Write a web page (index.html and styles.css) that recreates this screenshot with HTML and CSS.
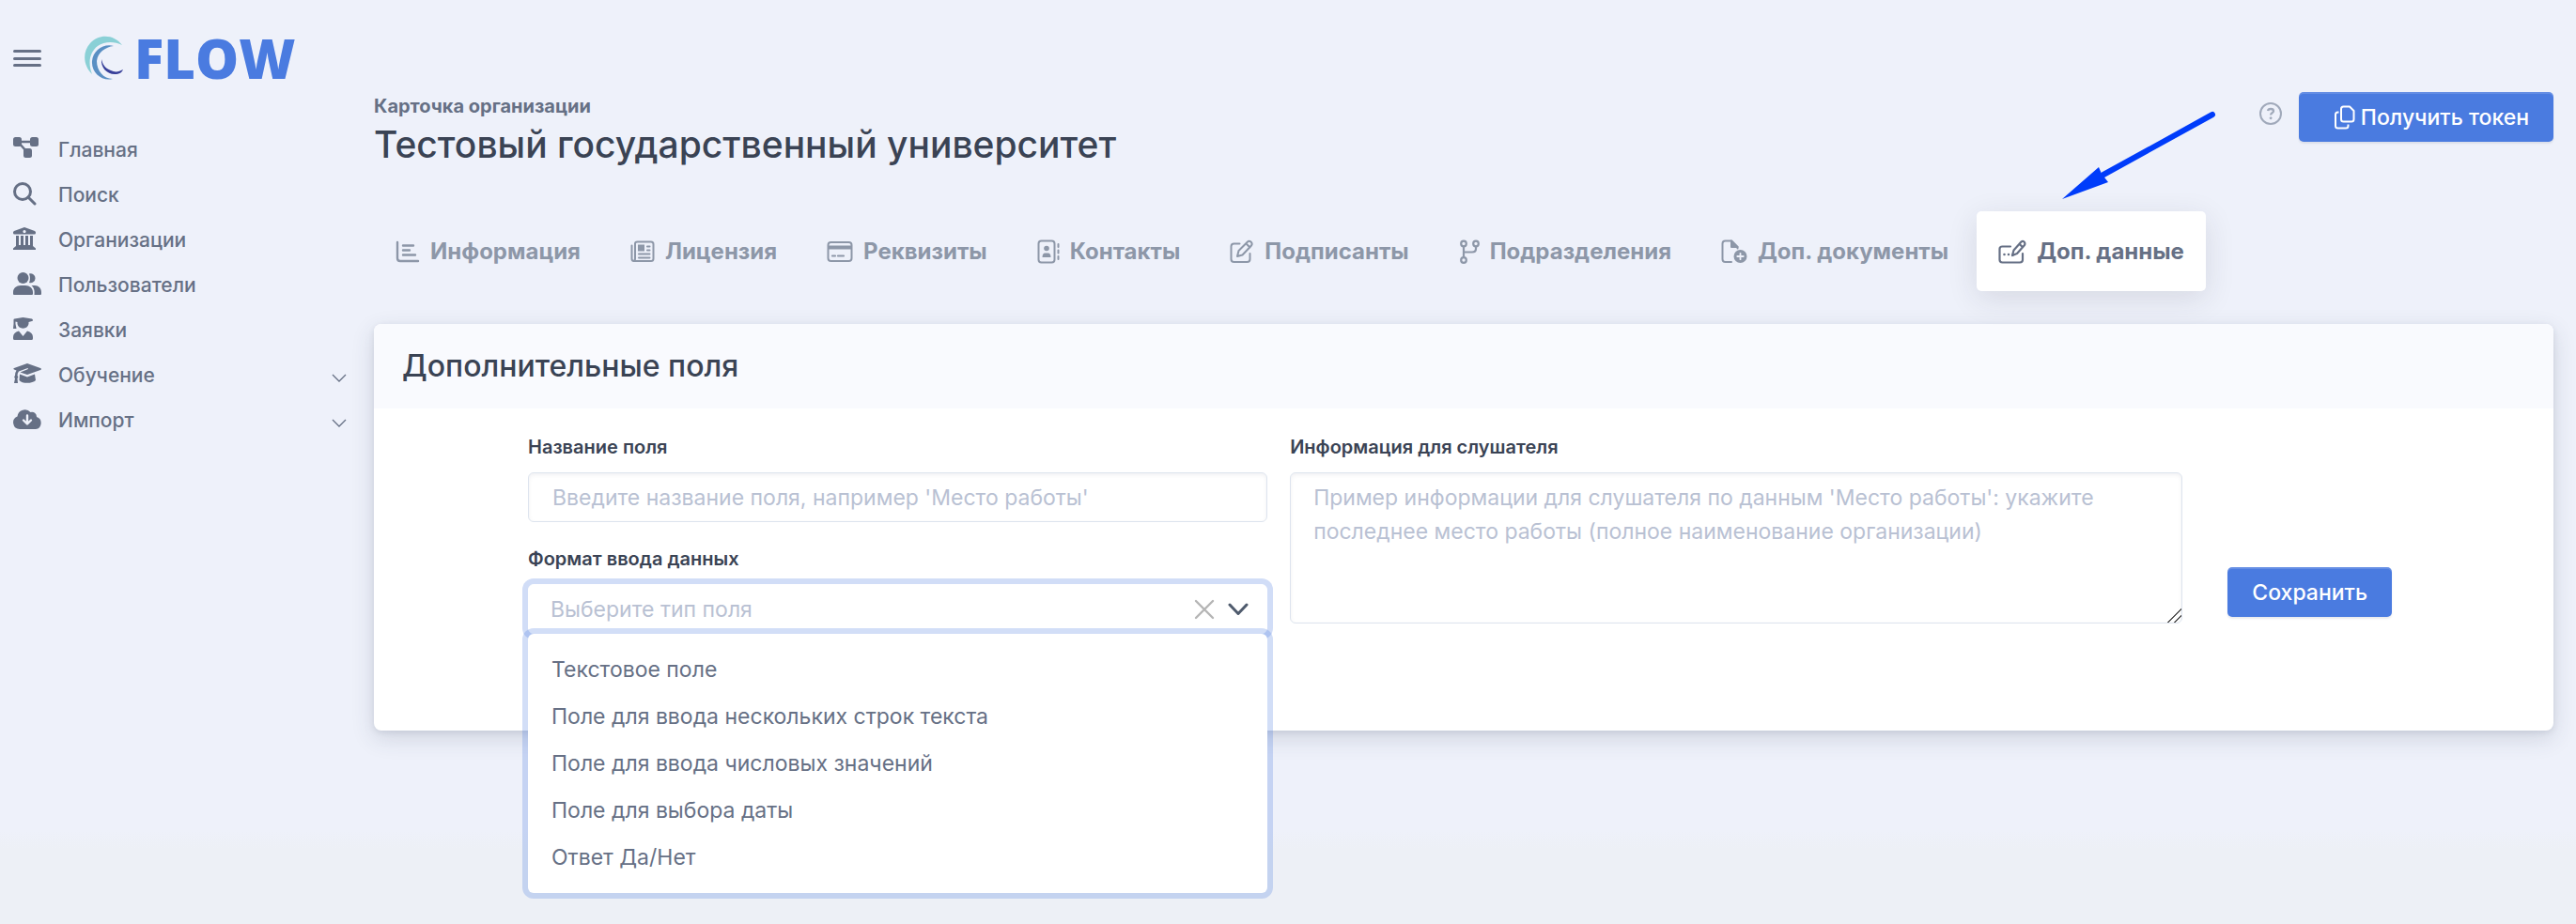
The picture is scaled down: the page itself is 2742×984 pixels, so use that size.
FILE: index.html
```html
<!DOCTYPE html>
<html lang="ru">
<head>
<meta charset="utf-8">
<title>FLOW — Карточка организации</title>
<link rel="stylesheet" href="styles.css">
</head>
<body>
<div class="layout">
  <aside class="sidebar">
    <div class="brand-row">
      <button class="menu-toggle" type="button" aria-label="Меню">
        <svg width="30" height="20" viewBox="0 0 30 20" fill="none" stroke="currentColor" stroke-width="3" stroke-linecap="round"><path d="M1.5 2.500h27M1.500 10.500h27M1.500 17.500h27"/></svg>
      </button>
      <a class="brand" href="#">
        <svg width="44" height="48" viewBox="0 0 44 48">
          <path d="M40 10C32 -1 16 -3 6 8C-3 18 -1 32 8 41C3 28 6 17 14 11C21 6 32 6 40 10Z" fill="#8ad0d6"/>
          <path d="M31 11C20 8 9 16 8 27C7 40 19 49 30 46C20 46 13 37 13 27C14 18 22 12 31 11Z" fill="#5a8fc3"/>
          <path d="M18 25C17 34 24 41 32 41C37 41 40 39 41 36C36 39 32 39 28 37C22 35 19 30 18 25Z" fill="#38409a"/>
        </svg>
        <span class="brand-name">FLOW</span>
      </a>
    </div>
    <nav class="side-nav">
      <a class="side-link" href="#"><svg class="side-icon" width="30" height="26" viewBox="0 0 30 26" fill="currentColor"><rect x="0" y="1" width="9" height="10" rx="2.500"/><rect x="18" y="1" width="9" height="10" rx="2.500"/><rect x="11" y="13" width="9" height="10" rx="2.500"/><path d="M7 6h13M6 7l8 9" stroke="currentColor" stroke-width="2.500"/></svg><span>Главная</span></a>
      <a class="side-link" href="#"><svg class="side-icon" width="30" height="26" viewBox="0 0 30 26" fill="none" stroke="currentColor" stroke-width="3" stroke-linecap="round"><circle cx="10" cy="11" r="8.500"/><path d="M16 17l7 7"/></svg><span>Поиск</span></a>
      <a class="side-link" href="#"><svg class="side-icon" width="30" height="26" viewBox="0 0 30 26" fill="currentColor"><path fill-rule="evenodd" d="M12 1L23 5Q24 5.500 24 6.500V7Q24 8.500 22.500 8.500H1.500Q0 8.500 0 7V6.500Q0 5.500 1 5ZM12 4a1.600 1.600 0 1 0 .01 0Z"/><path d="M3 10h3v10h2v-10h3v10h2v-10h3v10h2v-10h3v11l3 2.500v1.500H0v-1.500L3 21Z"/></svg><span>Организации</span></a>
      <a class="side-link" href="#"><svg class="side-icon" width="30" height="26" viewBox="0 0 30 26" fill="currentColor"><circle cx="10.500" cy="7" r="6"/><path d="M17 2.500a5 5 0 1 1 0 9.500q2-4.500 0-9.500ZM0 24v-2c0-4 3.500-7 8-7h5c4.500 0 8 3 8 7v2q0 1-1 1H1q-1 0-1-1ZM19.500 15H23c4 0 7 3 7 7v2q0 1-1 1h-6.500c.5-4 0-7.500-3-10Z"/></svg><span>Пользователи</span></a>
      <a class="side-link" href="#"><svg class="side-icon" width="30" height="26" viewBox="0 0 30 26" fill="currentColor"><path d="M10.500 1L20 2.500Q21 3 21 4Q21 5 20 5L16.500 6V8a6.200 6.200 0 0 1-12 0V6L2.500 5.500V8L3.500 13H0L.5 8V3.500Q.5 2.500 1.500 2.400ZM6 15.500L10.500 21L15 15.500C19 16.500 21 19 21 22v1.500q0 1.500-1.500 1.500h-18Q0 25 0 23.500V22C0 19 2 16.500 6 15.500Z"/></svg><span>Заявки</span></a>
      <a class="side-link" href="#"><svg class="side-icon" width="30" height="26" viewBox="0 0 30 26" fill="currentColor"><path d="M15 2L29 7Q31 8 29 9L15 14L7.500 11.500L16 8L15.500 7L6 10.500Q4.500 12 4.500 15Q6 16.500 4.500 18L5 23H1L2 18Q.5 16.500 2 15Q2 11.500 3.500 9.500L1 8.500Q-.5 7.800 1 7ZM7 13.500L15 16.500L23 13.500L24 20C21 23.500 9.500 24 6.500 20Z"/></svg><span>Обучение</span><svg class="side-chevron" width="16" height="10" viewBox="0 0 16 10" fill="none" stroke="currentColor" stroke-width="1.300"><path d="M1 1l7 7 7-7"/></svg></a>
      <a class="side-link" href="#"><svg class="side-icon" width="30" height="26" viewBox="0 0 30 26" fill="currentColor"><path d="M7 24A7 7 0 0 1 4.500 10.500A8 8 0 0 1 18.500 6A5 5 0 0 1 25 11A6.700 6.700 0 0 1 24 24Z"/><path d="M15 9.500v8M11 14.500l4 4 4-4" fill="none" stroke="#eef1fa" stroke-width="2.400" stroke-linecap="round" stroke-linejoin="round"/></svg><span>Импорт</span><svg class="side-chevron" width="16" height="10" viewBox="0 0 16 10" fill="none" stroke="currentColor" stroke-width="1.300"><path d="M1 1l7 7 7-7"/></svg></a>
    </nav>
  </aside>

  <main class="content">
    <header class="page-head">
      <div>
        <p class="overline">Карточка организации</p>
        <h1 class="page-title">Тестовый государственный университет</h1>
      </div>
      <div class="head-actions">
        <button class="help" type="button" aria-label="Справка"><svg width="24" height="24" viewBox="0 0 24 24" fill="none" stroke="currentColor" stroke-width="2"><circle cx="12" cy="12" r="11"/><path d="M9 9C9.300 7.500 10.300 7 12 7c2 0 3 .8 3 2.200 0 2-2.900 2-2.900 4.300" stroke-width="2.300"/><circle cx="12.100" cy="16.800" r="1" fill="currentColor" stroke-width="1"/></svg></button>
        <button class="btn btn-token" type="button"><svg width="22" height="26" viewBox="0 0 22 26" fill="none" stroke="currentColor" stroke-width="2" stroke-linejoin="round"><path d="M9.500 1.500h6.500l4.500 4.500v9q0 2.500-2.500 2.500h-8.500q-2.500 0-2.500-2.500v-11q0-2.500 2.500-2.500Z"/><path d="M4.500 7.500h-1q-2.500 0-2.500 2.500v12q0 2.500 2.500 2.500h8.500q2.500 0 2.500-2.500v-1.500"/></svg>Получить токен</button>
      </div>
      <svg class="pointer" width="170" height="98" viewBox="0 0 170 98"><path d="M162 6L46 70" stroke="#003cfa" stroke-width="6" stroke-linecap="round"/><path d="M2 96L41 62L44 69L51 78Z" fill="#003cfa"/></svg>
    </header>

    <nav class="tabs">
      <a class="tab" href="#"><svg width="26" height="24" viewBox="0 0 26 24" fill="none" stroke="currentColor" stroke-width="2.400" stroke-linecap="round"><path d="M2 2v17q0 3 3 3h19M8 5.500h11M8 10.500h7M8 15.500h13"/></svg>Информация</a>
      <a class="tab" href="#"><svg width="26" height="24" viewBox="0 0 26 24" fill="none" stroke="currentColor" stroke-width="2" stroke-linecap="round"><path d="M5 4.500V3.500Q5 1.500 7.500 1.500h14.500Q24.500 1.500 24.500 4v15.500Q24.500 22 22 22H4Q1.500 22 1.500 19.500V5.500M5 4.500v15q0 2.500-2 2.500M9 14.500h11.500M9 18.500h11.500M18 6.500h2.500M18 10.500h2.500"/><rect x="9" y="5.500" width="5" height="5" fill="currentColor"/></svg>Лицензия</a>
      <a class="tab" href="#"><svg width="28" height="24" viewBox="0 0 28 24" fill="none" stroke="currentColor" stroke-width="2"><rect x="1.500" y="2" width="25" height="20" rx="3"/><path d="M1.500 7.500h25" stroke-width="4"/><path d="M6 16.500h3M12 16.500h6" stroke-width="2.200" stroke-linecap="round"/></svg>Реквизиты</a>
      <a class="tab" href="#"><svg width="24" height="26" viewBox="0 0 24 26" fill="none" stroke="currentColor" stroke-width="2" stroke-linecap="round"><rect x="1.500" y="1.500" width="17" height="23" rx="3"/><circle cx="10" cy="9.500" r="2.800" fill="currentColor" stroke="none"/><path d="M5.500 19q0-4.500 3-4.500h3q3 0 3 4.500Z" fill="currentColor" stroke="none"/><path d="M22.500 5v3M22.500 11.500v3M22.500 18v3"/></svg>Контакты</a>
      <a class="tab" href="#"><svg width="26" height="26" viewBox="0 0 26 26" fill="none" stroke="currentColor" stroke-width="2" stroke-linecap="round" stroke-linejoin="round"><path d="M10.500 4.500H4.500Q1.500 4.500 1.500 7.500v13.500q0 3 3 3h14q3 0 3-3v-6"/><path d="M8 18l1.500-6L19 2.500q1.500-1.500 3.500 0q2 2 .5 4L13.500 16.500ZM17.500 4.500l4 4"/></svg>Подписанты</a>
      <a class="tab" href="#"><svg width="22" height="26" viewBox="0 0 22 26" fill="none" stroke="currentColor" stroke-width="2.200"><circle cx="5" cy="4.500" r="2.800"/><circle cx="18" cy="4.500" r="2.800"/><circle cx="5" cy="22" r="2.800"/><path d="M5 7.500v11.500M5 13.500h9q4 0 4-3.500V7.500"/></svg>Подразделения</a>
      <a class="tab" href="#"><svg width="28" height="26" viewBox="0 0 28 26" fill="none" stroke="currentColor" stroke-width="2" stroke-linecap="round" stroke-linejoin="round"><path d="M11 24H4.500Q1.500 24 1.500 21V4.500Q1.500 1.500 4.500 1.500H11L17.500 8v1.500"/><path d="M11 1.500v6.500h6.500Z" fill="currentColor"/><circle cx="20.500" cy="18" r="7" fill="currentColor" stroke="none"/><path d="M20.500 14.800v6.400M17.300 18h6.400" stroke="#eef1fa" stroke-width="1.800"/></svg>Доп. документы</a>
      <a class="tab tab-active" href="#" aria-current="page"><svg width="30" height="26" viewBox="0 0 30 26" fill="none" stroke="currentColor" stroke-width="2.200" stroke-linecap="round" stroke-linejoin="round"><path d="M13 7.500H4.500Q1.500 7.500 1.500 10v11.500Q1.500 24.500 4.500 24.500H23q3 0 3-3V15"/><path d="M15 17l1.500-5.500L24.500 2.500q1.500-1.300 3 0q1.500 1.500.5 3.500L20 15ZM22.500 4.800l3.500 3.500"/><path d="M6.500 16v.01M11 16v.01M15.500 16.500v.01" stroke-width="2.600"/></svg>Доп. данные</a>
    </nav>

    <section class="card">
      <header class="card-head"><h2 class="card-title">Дополнительные поля</h2></header>
      <form class="fields">
        <div class="field-col">
          <div class="field">
            <label for="name">Название поля</label>
            <input class="control" id="name" type="text" placeholder="Введите название поля, например 'Место работы'">
          </div>
          <div class="field">
            <label for="format">Формат ввода данных</label>
            <div class="combo">
              <select class="control combo-control" id="format"><option>Выберите тип поля</option></select>
              <span class="combo-icons">
                <button class="combo-clear" type="button" aria-label="Очистить"><svg width="22" height="22" viewBox="0 0 22 22" fill="none" stroke="currentColor" stroke-width="2.400" stroke-linecap="round"><path d="M2 2l18 18M20 2L2 20"/></svg></button>
                <svg width="22" height="14" viewBox="0 0 22 14" fill="none" stroke="currentColor" stroke-width="3" stroke-linecap="round" stroke-linejoin="round"><path d="M2 2l9 9.500L20 2"/></svg>
              </span>
              <ul class="options" role="listbox" aria-label="Формат ввода данных">
                <li role="option">Текстовое поле</li>
                <li role="option">Поле для ввода нескольких строк текста</li>
                <li role="option">Поле для ввода числовых значений</li>
                <li role="option">Поле для выбора даты</li>
                <li role="option">Ответ Да/Нет</li>
              </ul>
            </div>
          </div>
        </div>
        <div class="field">
          <label for="info">Информация для слушателя</label>
          <textarea class="control control-area" id="info" placeholder="Пример информации для слушателя по данным 'Место работы': укажите последнее место работы (полное наименование организации)"></textarea>
        </div>
        <button class="btn btn-save" type="submit">Сохранить</button>
      </form>
    </section>
  </main>
</div>
</body>
</html>
```
FILE: styles.css
```css
* { box-sizing: border-box; }

body {
  margin: 0;
  min-height: 100vh;
  background: linear-gradient(#eef1fa calc(100% - 100px), #edf0f6 calc(100% - 80px));
  color: #667085;
  font: 400 23px/36px Inter, "Noto Sans", sans-serif;
}

a { color: inherit; text-decoration: none; }
button { font: inherit; color: inherit; border: 0; background: none; padding: 0; cursor: pointer; }
svg { flex: none; display: block; }
h1, h2, p, ul { margin: 0; padding: 0; }

.layout { display: grid; grid-template-columns: 398px 1fr; }

.sidebar { padding: 32px 29px 0 14px; }
.brand-row { display: flex; align-items: center; gap: 46px; height: 60px; }
.brand { display: flex; align-items: center; gap: 9px; }
.brand-name { font-family: "Open Sans", Inter, sans-serif; font-size: 58px; line-height: 60px; font-weight: 800; color: #4a7be0; }
.side-nav { display: flex; flex-direction: column; margin-top: 44px; }
.side-link { display: flex; align-items: center; height: 48px; gap: 18px; font-size: 21px; font-weight: 500; color: #667085; }
.side-icon { margin-bottom: 4px; }
.side-chevron { margin: 6px 0 0 auto; }

.content { padding: 98px 24px 0 0; }
.page-head { position: relative; display: flex; justify-content: space-between; align-items: flex-start; }
.overline { margin-bottom: 2px; font-size: 20px; line-height: 30px; font-weight: 700; }
.page-title { font-size: 39px; line-height: 48px; font-weight: 500; color: #3a4354; }
.head-actions { display: flex; align-items: flex-start; gap: 18px; }
.help { margin-top: 11px; color: #a0a9ba; }
.pointer { position: absolute; right: 355px; top: 18px; }

.btn {
  height: 53px;
  border-radius: 5px;
  background: #4a7be0;
  color: #fff;
  font-weight: 500;
  box-shadow: inset 0 2px 0 rgba(255, 255, 255, .15), 0 2px 2px rgba(50, 60, 90, .1);
}
.btn-token { display: flex; align-items: center; gap: 6px; padding: 0 26px 0 38px; }
.btn-save { padding: 0 26px; }

.tabs { display: flex; gap: 7px; margin-top: 47px; }
.tab { display: flex; align-items: center; gap: 11px; height: 85px; padding: 0 23px; border-radius: 5px; font-size: 24px; font-weight: 700; color: #8d97a8; white-space: nowrap; }
.tab-active { background: #fff; color: #667085; box-shadow: 0 8px 32px rgba(40, 45, 60, .12); }

.card { margin-top: 35px; border-radius: 8px; background: #fff; box-shadow: 0 8px 24px rgba(50, 60, 90, .16), 0 2px 6px rgba(50, 60, 90, .1); }
.card-head { padding: 22px 30px; border-radius: 8px 8px 0 0; background: #f9fafe; }
.card-title { font-size: 32px; line-height: 46px; font-weight: 500; color: #3a4354; }

.fields { display: grid; grid-template-columns: 787fr 974fr auto; align-items: start; padding: 25px 172px 103px 164px; }
.fields > .field { margin-left: 24px; }
.fields > .btn-save { margin-left: 48px; margin-top: 144px; }
.field { display: flex; flex-direction: column; gap: 11px; }
.field-col { display: flex; flex-direction: column; gap: 23px; }
label { font-size: 20px; line-height: 32px; font-weight: 600; color: #3a4354; }

.control {
  display: block;
  width: 100%;
  height: 53px;
  padding: 0 25px;
  border: 1px solid #dde4ee;
  border-radius: 6px;
  background: #fff;
  color: #667085;
  font: inherit;
  outline: 0;
  box-shadow: inset 0 2px 4px rgba(50, 60, 90, .07);
}
.control::placeholder { color: #b9c1d3; opacity: 1; }
.control-area { height: 161px; padding: 8px 24px; resize: both; }
.control-area::-webkit-resizer {
  background: linear-gradient(135deg, transparent 48%, #555 48%, #555 54%, transparent 54%, transparent 72%, #555 72%, #555 78%, transparent 78%);
}

.combo { position: relative; }
.combo-control { appearance: none; padding: 0 23px; color: #b9c1d3; border-color: #fff; box-shadow: 0 0 0 6px #d1ddf7; }
.combo-icons { position: absolute; right: 20px; top: 0; height: 53px; display: flex; align-items: center; gap: 14px; color: #4f5b6d; }
.combo-clear { color: #b5b5b5; }
.options {
  position: absolute;
  top: 100%;
  left: 0;
  right: 0;
  padding: 13px 25px;
  border-radius: 6px;
  background: #fff;
  box-shadow: 0 0 0 6px rgba(74, 123, 224, .25);
  list-style: none;
  line-height: 50px;
}
```
